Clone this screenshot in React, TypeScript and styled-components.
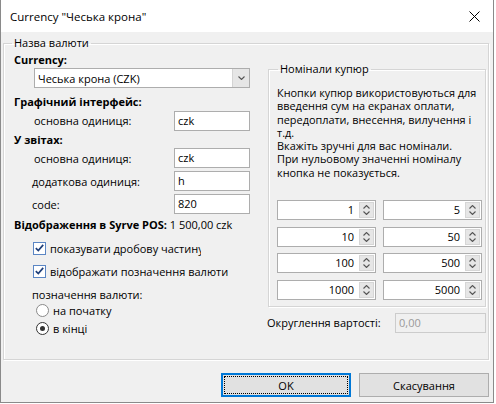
import styled, { createGlobalStyle } from "styled-components";

const GlobalStyle = createGlobalStyle`
  html, body {
    margin: 0;
    padding: 0;
    background: #ffffff;
  }
  body {
    font-family: "Open Sans", "Liberation Sans", sans-serif;
    font-size: 11px;
    color: #000;
  }
  * {
    box-sizing: border-box;
  }
`;

const Window = styled.div`
  width: 494px;
  height: 403px;
  background: #f0f0f0;
  border: 1px solid #8a8a8a;
  border-top: none;
  display: flex;
  flex-direction: column;
`;

const TitleBar = styled.div`
  height: 32px;
  flex: none;
  background: #fff;
  display: flex;
  align-items: center;
  justify-content: space-between;
  padding: 0 13px 0 9px;
  font-size: 11.5px;
`;

const Body = styled.div`
  flex: 1;
  display: flex;
  flex-direction: column;
  padding: 0 4px 0 1px;
`;

const Group = styled.fieldset`
  margin: 3px 0 0 1px;
  padding: 1px 2px 0 10px;
  border: 1px solid #d5d5d5;
  box-shadow: inset 1px 1px 0 #fff, 1px 1px 0 #fff;
  min-width: 0;
`;

const Legend = styled.legend<{ $shift?: number }>`
  padding: 0 2px;
  margin-left: ${(p) => p.$shift ?? -2}px;
  line-height: 16px;
  color: #000;
`;

const Columns = styled.div`
  display: grid;
  grid-template-columns: 236px 218px;
  column-gap: 18px;
  height: 307px;
`;

const LeftCol = styled.div`
  display: flex;
  flex-direction: column;
`;

const Heading = styled.div<{ $top?: number }>`
  height: 16px;
  line-height: 16px;
  font-weight: 700;
  margin-top: ${(p) => p.$top ?? 0}px;
  white-space: nowrap;
`;

const Plain = styled.span`
  font-weight: 400;
`;

const Combo = styled.div`
  margin-left: 20px;
  height: 20px;
  background: #fff;
  border: 1px solid #adadad;
  display: flex;
  align-items: center;
`;

const ComboText = styled.div`
  flex: 1;
  padding-left: 3px;
`;

const ComboButton = styled.div`
  width: 17px;
  height: 18px;
  background: #e6e6e6;
  border-left: 1px solid #d4d4d4;
  display: flex;
  align-items: center;
  justify-content: center;
`;

const FieldRow = styled.div<{ $top?: number; $indent?: number; $h?: number }>`
  display: flex;
  align-items: center;
  justify-content: space-between;
  height: ${(p) => p.$h ?? 20}px;
  margin-top: ${(p) => p.$top ?? 0}px;
  padding-left: ${(p) => p.$indent ?? 20}px;
`;

const TextInput = styled.div<{ $disabled?: boolean; $w?: number }>`
  width: ${(p) => p.$w ?? 76}px;
  height: 20px;
  line-height: 18px;
  padding-left: 3px;
  background: ${(p) => (p.$disabled ? "#f0f0f0" : "#fff")};
  border: 1px solid ${(p) => (p.$disabled ? "#cccccc" : "#adadad")};
  color: ${(p) => (p.$disabled ? "#9a9a9a" : "#000")};
`;

const OptionRow = styled.div<{ $top?: number; $indent: number }>`
  display: flex;
  align-items: center;
  gap: 4px;
  height: 16px;
  margin-top: ${(p) => p.$top ?? 0}px;
  padding-left: ${(p) => p.$indent}px;
  white-space: nowrap;
`;

const Clip = styled.span<{ $w: number }>`
  display: inline-block;
  max-width: ${(p) => p.$w}px;
  overflow: hidden;
`;

const Box = styled.span`
  width: 13px;
  height: 13px;
  flex: none;
  background: #fff;
  border: 1px solid #5b86c4;
  display: inline-flex;
  align-items: center;
  justify-content: center;
`;

const Radio = styled.span<{ $on?: boolean }>`
  width: 13px;
  height: 13px;
  flex: none;
  border-radius: 50%;
  background: #fff;
  border: 1px solid ${(p) => (p.$on ? "#333" : "#8a8a8a")};
  display: inline-flex;
  align-items: center;
  justify-content: center;
  &::after {
    content: "";
    width: 5px;
    height: 5px;
    border-radius: 50%;
    background: ${(p) => (p.$on ? "#333" : "transparent")};
  }
`;

const PlainLabel = styled.div<{ $top?: number; $indent?: number }>`
  height: 14px;
  line-height: 14px;
  margin-top: ${(p) => p.$top ?? 0}px;
  padding-left: ${(p) => p.$indent ?? 18}px;
`;

const RightCol = styled.div`
  display: flex;
  flex-direction: column;
  margin-top: 9px;
`;

const NoteGroup = styled.fieldset`
  margin: 0;
  padding: 0 6px 6px 8px;
  border: 1px solid #d5d5d5;
  box-shadow: inset 1px 1px 0 #fff, 1px 1px 0 #fff;
  min-width: 0;
`;

const Note = styled.div`
  margin-top: 9px;
  display: flex;
  flex-direction: column;
`;

const NoteLine = styled.div`
  height: 13.3px;
  line-height: 13.3px;
  font-size: 10.9px;
  white-space: nowrap;
`;

const SpinGrid = styled.div`
  display: grid;
  grid-template-columns: 99px 99px;
  column-gap: 7px;
  row-gap: 6.5px;
  margin-top: 21px;
`;

const Spin = styled.div`
  height: 20px;
  display: flex;
  background: #fff;
  border: 1px solid #adadad;
`;

const SpinValue = styled.div`
  flex: 1;
  text-align: right;
  line-height: 18px;
  padding-right: 4px;
`;

const SpinButtons = styled.div`
  width: 15px;
  margin: 1px;
  background: #e6e6e6;
  border: 1px solid #d6d6d6;
  display: flex;
  flex-direction: column;
  align-items: center;
  justify-content: center;
  gap: 2px;
`;

const RoundRow = styled.div`
  display: flex;
  align-items: center;
  justify-content: space-between;
  height: 20px;
  margin: 6px 0 0 -1px;
`;

const Footer = styled.div`
  display: flex;
  justify-content: flex-end;
  gap: 8px;
  margin-top: 13px;
`;

const Button = styled.button<{ $focus?: boolean }>`
  position: relative;
  width: 130px;
  height: 24px;
  font: inherit;
  color: #000;
  background: #e1e1e1;
  border: 1px solid ${(p) => (p.$focus ? "#0078d7" : "#adadad")};
  ${(p) => (p.$focus ? "box-shadow: inset 0 0 0 1px #0078d7;" : "")}
  padding: 0;
  &::after {
    content: "";
    position: absolute;
    inset: 2px;
    border: 1px dotted ${(p) => (p.$focus ? "#000" : "transparent")};
  }
`;

const Chevron = ({ up }: { up?: boolean }) => (
  <svg width="7" height="4" viewBox="0 0 7 4">
    <path
      d={up ? "M0.5 3.5 L3.5 0.5 L6.5 3.5" : "M0.5 0.5 L3.5 3.5 L6.5 0.5"}
      fill="none"
      stroke="#555"
      strokeWidth="1.1"
    />
  </svg>
);

const Check = () => (
  <svg width="9" height="8" viewBox="0 0 9 8">
    <path d="M0.8 4.2 L3.3 6.6 L8.2 0.9" fill="none" stroke="#1f3f7a" strokeWidth="1.7" />
  </svg>
);

const notes = [1, 5, 10, 50, 100, 500, 1000, 5000];

const noteText = [
  "Кнопки купюр використовуються для",
  "введення сум на екранах оплати,",
  "передоплати, внесення, вилучення і",
  "т.д.",
  "Вкажіть зручні для вас номінали.",
  "При нульовому значенні номіналу",
  "кнопка не показується.",
];

export default function App() {
  return (
    <>
      <GlobalStyle />
      <Window>
        <TitleBar>
          <span>Currency "Чеська крона"</span>
          <svg width="11" height="11" viewBox="0 0 11 11">
            <path d="M0.5 0.5 L10.5 10.5 M10.5 0.5 L0.5 10.5" stroke="#000" strokeWidth="1" />
          </svg>
        </TitleBar>
        <Body>
          <Group>
            <Legend>Назва валюти</Legend>
            <Columns>
              <LeftCol>
                <Heading>Currency:</Heading>
                <Combo>
                  <ComboText>Чеська крона (CZK)</ComboText>
                  <ComboButton>
                    <Chevron />
                  </ComboButton>
                </Combo>
                <Heading $top={6}>Графічний інтерфейс:</Heading>
                <FieldRow $h={21}>
                  <span>основна одиниця:</span>
                  <TextInput>czk</TextInput>
                </FieldRow>
                <Heading $top={1}>У звітах:</Heading>
                <FieldRow>
                  <span>основна одиниця:</span>
                  <TextInput>czk</TextInput>
                </FieldRow>
                <FieldRow $top={3} $indent={18}>
                  <span>додаткова одиниця:</span>
                  <TextInput>h</TextInput>
                </FieldRow>
                <FieldRow $top={3} $indent={18}>
                  <span>code:</span>
                  <TextInput>820</TextInput>
                </FieldRow>
                <Heading $top={3}>
                  Відображення в Syrve POS: <Plain>1 500,00 czk</Plain>
                </Heading>
                <OptionRow $top={7} $indent={19}>
                  <Box>
                    <Check />
                  </Box>
                  <Clip $w={151}>показувати дробову частину</Clip>
                </OptionRow>
                <OptionRow $top={7} $indent={19}>
                  <Box>
                    <Check />
                  </Box>
                  <span>відображати позначення валюти</span>
                </OptionRow>
                <PlainLabel $top={9}>позначення валюти:</PlainLabel>
                <OptionRow $top={0} $indent={22}>
                  <Radio />
                  <Clip $w={72}>на початку</Clip>
                </OptionRow>
                <OptionRow $top={2} $indent={22}>
                  <Radio $on />
                  <span>в кінці</span>
                </OptionRow>
              </LeftCol>
              <RightCol>
                <NoteGroup>
                  <Legend $shift={1}>Номінали купюр</Legend>
                  <Note>
                    {noteText.map((line) => (
                      <NoteLine key={line}>{line}</NoteLine>
                    ))}
                  </Note>
                  <SpinGrid>
                    {notes.map((n) => (
                      <Spin key={n}>
                        <SpinValue>{n}</SpinValue>
                        <SpinButtons>
                          <Chevron up />
                          <Chevron />
                        </SpinButtons>
                      </Spin>
                    ))}
                  </SpinGrid>
                </NoteGroup>
                <RoundRow>
                  <span>Округлення вартості:</span>
                  <TextInput $disabled $w={91}>
                    0,00
                  </TextInput>
                </RoundRow>
              </RightCol>
            </Columns>
          </Group>
          <Footer>
            <Button $focus>OK</Button>
            <Button>Скасування</Button>
          </Footer>
        </Body>
      </Window>
    </>
  );
}
